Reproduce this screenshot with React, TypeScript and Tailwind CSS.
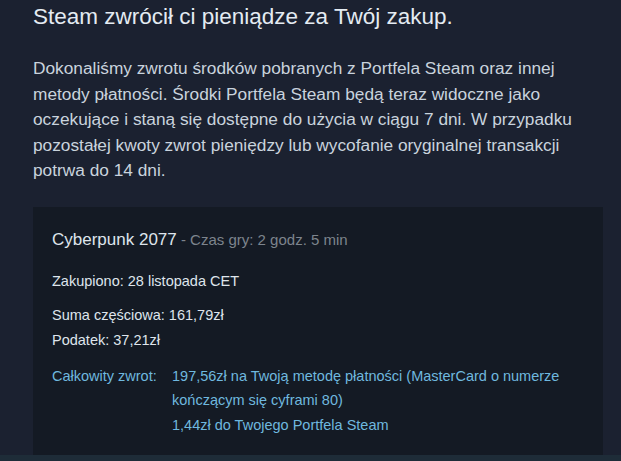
export default function App() {
  return (
    <div className="w-[621px] h-[461px] overflow-hidden bg-[#1b2130] font-['Liberation_Sans',Arial,sans-serif] flex flex-col">
      <div className="flex-1 px-[33px] pt-[2px]">
        {/* Header */}
        <h1 className="text-[22.5px] leading-[30px] text-[#e4ebf2]">Steam zwrócił ci pieniądze za Twój zakup.</h1>
        <p className="mt-[24px] w-[556px] text-[17.3px] leading-[25.5px] text-[#c9d3dd]">
          Dokonaliśmy zwrotu środków pobranych z Portfela Steam oraz innej metody płatności. Środki Portfela Steam będą teraz widoczne jako oczekujące i staną się dostępne do użycia w ciągu 7 dni. W przypadku pozostałej kwoty zwrot pieniędzy lub wycofanie oryginalnej transakcji potrwa do 14 dni.
        </p>

        {/* Receipt */}
        <div className="mt-[23px] w-[570px] bg-[#141a24] px-[19px] pt-[22px] pb-[18px] text-[14.5px]">
          <div className="leading-[22px]">
            <span className="text-[17px] text-[#dfe5ec]">Cyberpunk 2077</span>
            <span className="text-[15px] text-[#7d848d]"> - Czas gry: 2 godz. 5 min</span>
          </div>
          <div className="mt-[19px] text-[#dfe5ec] leading-[22px]">Zakupiono: 28 listopada CET</div>
          <div className="mt-[11px] text-[#dfe5ec] leading-[25px]">
            <div>Suma częściowa: 161,79zł</div>
            <div>Podatek: 37,21zł</div>
          </div>
          <div className="mt-[11px] flex text-[#6fb8df] leading-[24.5px]">
            <div className="w-[120px] shrink-0">Całkowity zwrot:</div>
            <div>
              <div>197,56zł na Twoją metodę płatności (MasterCard o numerze kończącym się cyframi 80)</div>
              <div>1,44zł do Twojego Portfela Steam</div>
            </div>
          </div>
        </div>
      </div>
      <div className="h-[6px] bg-[#1e2c38]" />
    </div>
  );
}
